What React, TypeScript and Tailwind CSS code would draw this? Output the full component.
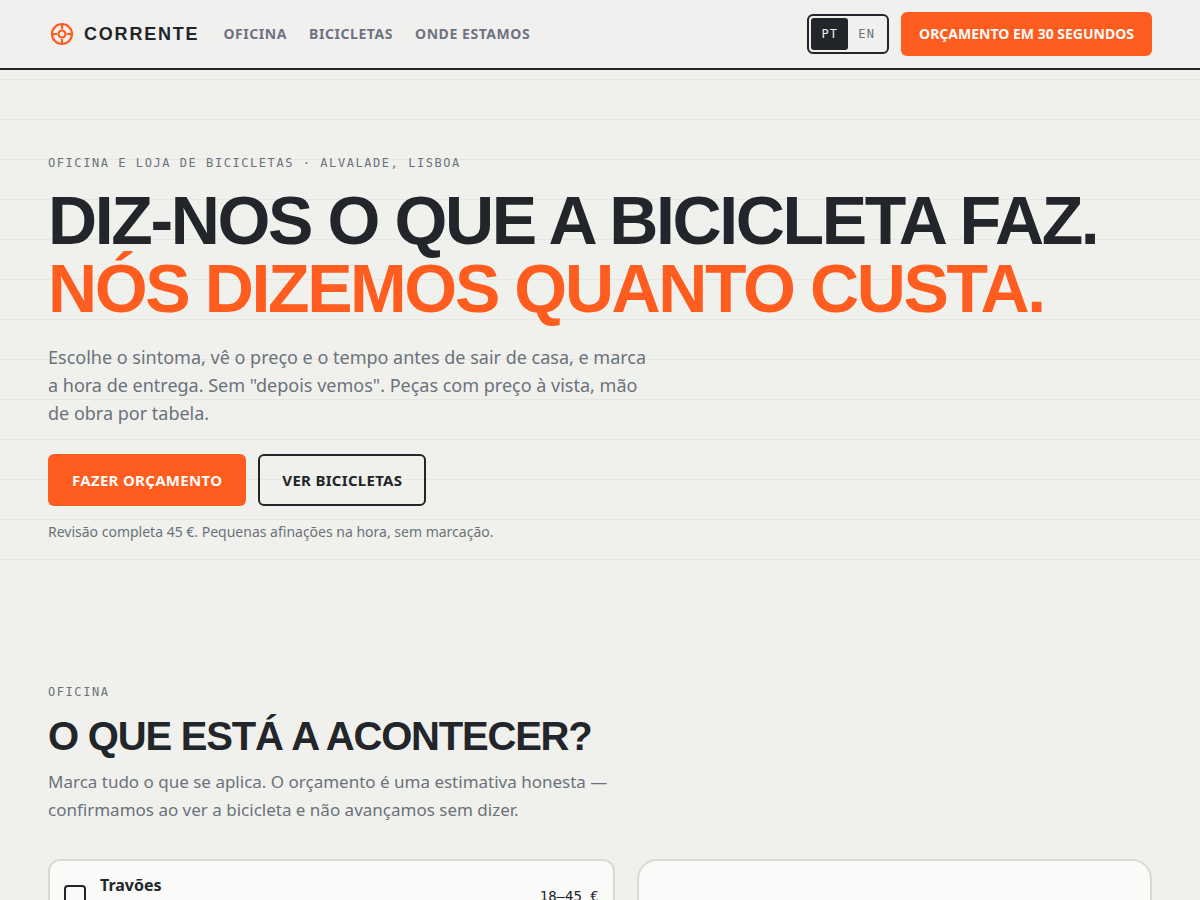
import { useState } from "react";

const NAV_LINKS = [
  { label: "Oficina", href: "#oficina" },
  { label: "Bicicletas", href: "#bicicletas" },
  { label: "Onde estamos", href: "#onde" },
];

const LANGS = ["pt", "en"];

const Logo = () => (
  <svg
    width="28"
    height="28"
    viewBox="0 0 28 28"
    fill="none"
    stroke="#ff5c1f"
    strokeWidth="2.2"
    aria-hidden="true"
  >
    <circle cx="14" cy="14" r="10" />
    <circle cx="14" cy="14" r="3.5" />
    <path d="M14 4v5M14 19v5M4 14h5M19 14h5" />
  </svg>
);

const Eyebrow = ({ children }: { children: string }) => (
  <p className="font-['DejaVu_Sans_Mono',monospace] text-xs leading-5 tracking-[0.13em] uppercase text-[#6b727c]">
    {children}
  </p>
);

const Header = () => {
  const [lang, setLang] = useState("pt");

  return (
    <header className="sticky top-0 z-10 border-b-2 border-[#22252a] bg-[#f0f1ee]">
      <div className="mx-auto flex max-w-[1200px] items-center justify-between px-12 py-3">
        <div className="flex items-center gap-6">
          <a
            href="#"
            className="flex items-center gap-2 font-['Liberation_Sans',sans-serif] text-lg font-bold tracking-[0.1em] uppercase"
          >
            <Logo />
            Corrente
          </a>
          <nav className="flex gap-[22px] text-sm leading-[18px] font-bold tracking-[0.04em] uppercase text-[#6f7282]">
            {NAV_LINKS.map((link) => (
              <a key={link.href} href={link.href}>
                {link.label}
              </a>
            ))}
          </nav>
        </div>

        <div className="flex items-center gap-3">
          <div className="flex rounded-md border-2 border-[#22252a] p-0.5 font-['DejaVu_Sans_Mono',monospace] text-xs">
            {LANGS.map((code) => (
              <button
                key={code}
                type="button"
                aria-pressed={lang === code}
                onClick={() => setLang(code)}
                className={`h-8 rounded-[3px] px-2.5 tracking-[0.1em] uppercase ${
                  lang === code ? "bg-[#22252a] text-[#f0f1ec]" : "text-[#6b727c]"
                }`}
              >
                {code}
              </button>
            ))}
          </div>
          <a
            href="#oficina"
            className="flex h-11 items-center rounded-md bg-[#ff5c1f] px-[18px] text-sm leading-[18px] font-bold uppercase text-[#fafbf8]"
          >
            Orçamento em 30 segundos
          </a>
        </div>
      </div>
    </header>
  );
};

const Hero = () => (
  // ruled paper lines, one every 40px, stopping above the next section
  <section className="bg-[repeating-linear-gradient(to_bottom,transparent_0_9px,#e5e7e2_9px_10px,transparent_10px_40px)]">
    <div className="mx-auto max-w-[1200px] px-12 pt-[83px] pb-14">
      <Eyebrow>Oficina e loja de bicicletas · Alvalade, Lisboa</Eyebrow>
      <h1 className="mt-[13px] font-['Liberation_Sans',sans-serif] text-[68px] leading-[68px] font-bold tracking-[-0.035em] uppercase">
        Diz-nos o que a bicicleta faz.
        <span className="block text-[#ff5c1f]">Nós dizemos quanto custa.</span>
      </h1>
      <p className="mt-[21px] max-w-[600px] text-lg leading-7 text-[#6b727c]">
        Escolhe o sintoma, vê o preço e o tempo antes de sair de casa, e marca a hora de entrega. Sem
        "depois vemos". Peças com preço à vista, mão de obra por tabela.
      </p>
      <div className="mt-[27px] flex gap-3 text-[15px] font-bold tracking-[0.02em] uppercase">
        <a
          href="#oficina"
          className="flex h-13 items-center rounded-md bg-[#ff5c1f] px-6 text-[#fafbf8]"
        >
          Fazer orçamento
        </a>
        <a
          href="#bicicletas"
          className="flex h-13 items-center rounded-md border-2 border-[#22252a] px-[22px]"
        >
          Ver bicicletas
        </a>
      </div>
      <p className="mt-4 text-sm leading-5 text-[#6b727c]">
        Revisão completa 45 €. Pequenas afinações na hora, sem marcação.
      </p>
    </div>
  </section>
);

const Workshop = () => (
  <section id="oficina" className="mx-auto max-w-[1200px] px-12 pt-[84px]">
    <Eyebrow>Oficina</Eyebrow>
    <h2 className="mt-3 font-['Liberation_Sans',sans-serif] text-[40px] leading-[44px] font-bold tracking-[-0.03em] uppercase">
      O que está a acontecer?
    </h2>
    <p className="mt-2.5 max-w-[600px] text-[17px] leading-7 text-[#6b727c]">
      Marca tudo o que se aplica. O orçamento é uma estimativa honesta — confirmamos ao ver a
      bicicleta e não avançamos sem dizer.
    </p>

    <div className="mt-[35px] grid grid-cols-[1.1fr_1fr] gap-[22px]">
      <label className="flex items-center gap-3.5 rounded-xl border-2 border-[#d8dad5] bg-[#fafbf8] px-3.5 py-3">
        <input
          type="checkbox"
          className="size-[22px] appearance-none rounded-[4px] border-2 border-[#22252a] checked:bg-[#ff5c1f]"
        />
        <span className="flex-1 leading-6 font-bold">
          Travões
          <span className="block h-[22px]" />
        </span>
        <span className="font-['DejaVu_Sans_Mono',monospace] text-sm">18–45 €</span>
      </label>
      <div className="rounded-[20px] border-2 border-[#d8dad5] bg-[#fafbf8]" />
    </div>
  </section>
);

const App = () => (
  <div className="min-h-screen bg-[#f0f1ec] font-['Noto_Sans',sans-serif] text-[#22252a]">
    <Header />
    <main>
      <Hero />
      <Workshop />
    </main>
  </div>
);

export default App;
